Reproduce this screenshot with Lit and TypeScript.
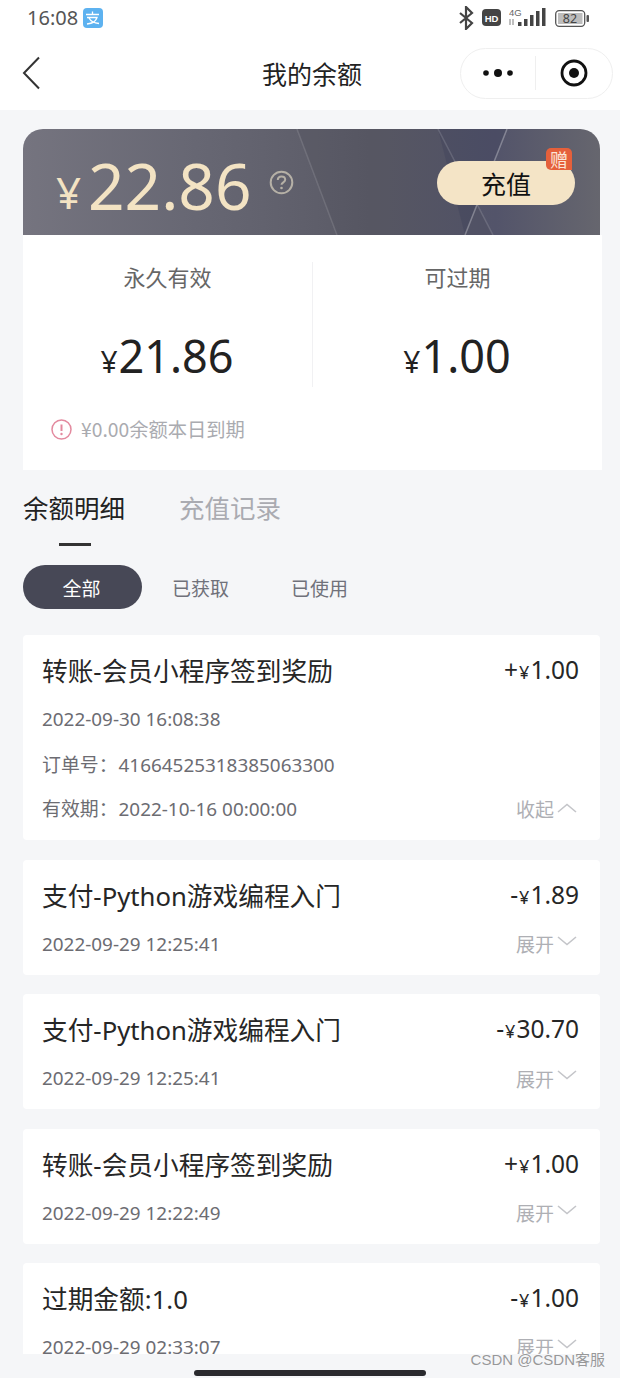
import { LitElement, html, css } from "lit";
import { customElement } from "lit/decorators.js";

const up = html`<svg class="chev up" viewBox="0 0 20 10" width="20" height="10"><path d="M1 9 L10 1.500 L19 9" fill="none" stroke="#c4c5c9" stroke-width="1.600"/></svg>`;
const down = html`<svg class="chev dn" viewBox="0 0 20 10" width="20" height="10"><path d="M1 1 L10 8.500 L19 1" fill="none" stroke="#c4c5c9" stroke-width="1.600"/></svg>`;

const rows = [
  { t: "支付-Python游戏编程入门", a: "1.89", s: "-", d: "2022-09-29 12:25:41" },
  { t: "支付-Python游戏编程入门", a: "30.70", s: "-", d: "2022-09-29 12:25:41" },
  { t: "转账-会员小程序签到奖励", a: "1.00", s: "+", d: "2022-09-29 12:22:49" },
  { t: "过期金额:1.0", a: "1.00", s: "-", d: "2022-09-29 02:33:07" },
];

@customElement("app-root")
export class AppRoot extends LitElement {
  static styles = css`
    :host { display: block; width: 620px; height: 1378px; overflow: hidden; position: relative; background: #f5f6f8;
      font-family: "Noto Sans CJK SC", "Noto Sans", sans-serif; color: #222; }
    * { box-sizing: border-box; }
    .status { height: 36px; background: #fff; display: flex; align-items: center; padding: 0 30px 0 27px; color: #555; }
    .time { font-family: "Noto Sans", sans-serif; font-size: 20px; line-height: 36px; color: #555; }
    .ali { margin-left: 5px; }
    .status-right { margin-left: auto; display: flex; align-items: center; gap: 8px; }
    .nav { height: 74px; background: #fff; display: flex; align-items: center; padding: 0 7px 0 22px; }
    .nav-title { flex: 1; text-align: center; font-size: 25px; color: #222; padding-left: 122px; line-height: 74px; }
    .capsule { width: 153px; height: 51px; border: 1px solid #efefef; border-radius: 26px; display: flex; align-items: center; background: #fff; }
    .cap-l { width: 75px; height: 34px; display: flex; align-items: center; justify-content: center; border-right: 1px solid #efefef; }
    .cap-r { flex: 1; display: flex; justify-content: center; }
    .main { height: 1244px; overflow: hidden; padding: 19px 0 0 23px; }
    .hero { width: 577px; height: 106px; border-radius: 20px 20px 0 0; position: relative; overflow: hidden;
      background: linear-gradient(90deg, #75747f 0%, #676773 30%, #5a5a66 60%, #53546a 82%, #66666e 100%); display: flex; align-items: center; padding-left: 34px; }
    .hero-bg { position: absolute; inset: 0; }
    .hero-y { position: relative; font-size: 44px; color: #f3e3c3; margin-top: 20px; font-family: "Noto Sans", sans-serif; font-weight: 400; line-height: 44px; width: 32px; margin-left: -1px; }
    .hero-a { position: relative; font-family: "Noto Sans", sans-serif; font-weight: 400; font-size: 64px; line-height: 106px; color: #f3e3c3; margin-top: 8px; }
    .q { position: relative; margin-left: 17px; margin-top: 0; }
    .recharge { position: absolute; left: 414px; top: 32px; width: 138px; height: 44px; border-radius: 22px; background: #f4e4c6; color: #111;
      font-size: 25px; display: flex; align-items: center; justify-content: center; }
    .gift { position: absolute; left: 523px; top: 19px; width: 26px; height: 22px; background: #e5603b; color: #fbe6d8; font-size: 18px; line-height: 22px; text-align: center; border-radius: 5px 5px 0 5px; }
    .sum { width: 579px; height: 235px; background: #fff; display: flex; flex-direction: column; }
    .cols { display: flex; height: 125px; margin-top: 27px; }
    .col { flex: 1; display: flex; flex-direction: column; align-items: center; }
    .col + .col { border-left: 1px solid #f1f1f3; }
    .col-l { font-size: 22px; color: #666; line-height: 34px; margin-top: -3px; }
    .col-v { font-family: "Noto Sans", sans-serif; font-size: 45px; line-height: 62px; color: #222; margin-top: 32px; display: flex; align-items: baseline; margin-left: -1px; }
    .y { font-size: 30px; margin-right: 1px; }
    .warn { display: flex; align-items: center; gap: 9px; margin: 28px 0 0 28px; font-size: 19.300px; color: #aaabb0; line-height: 28px; }
    .tabs { display: flex; gap: 54px; margin-top: 18px; height: 38px; font-size: 25.500px; line-height: 38px; color: #aaabb1; }
    .tab-on { color: #222; position: relative; }
    .tab-on::after { content: ""; position: absolute; left: 36px; top: 55px; width: 32px; height: 3px; background: #333; }
    .pills { display: flex; height: 44px; margin-top: 39px; }
    .pill { width: 119px; height: 44px; border-radius: 22px; display: flex; align-items: center; justify-content: center; font-size: 19px; color: #70717a; padding-right: 2px; }
    .pill.on { background: #474856; color: #fff; }
    .list { display: flex; flex-direction: column; gap: 19.400px; margin-top: 26.400px; width: 577px; }
    .card { background: #fff; border-radius: 4px; padding: 14px 21px 0 19px; flex: none; height: 115px; }
    .card.big { height: 205px; }
    .row { display: flex; justify-content: space-between; align-items: center; height: 42px; }
    .ttl { font-size: 25.700px; color: #262626; font-family: "Noto Sans", "Noto Sans CJK SC", sans-serif; }
    .amt { font-family: "Noto Sans", sans-serif; font-size: 24.500px; color: #262626; display: flex; align-items: baseline; margin-top: -1px; }
    .amt .y { font-size: 18px; margin: 0 1px; }
    .row2 { display: flex; justify-content: space-between; align-items: center; height: 28px; margin-top: 14px; font-size: 18.900px; color: #6c6c72; font-family: "Noto Sans", "Noto Sans CJK SC", sans-serif; }
    .row2.g { margin-top: 16.500px; }
    .lbl { margin-right: 1px; }
    .more { color: #aeafb4; display: flex; align-items: center; gap: 3px; font-family: "Noto Sans CJK SC", sans-serif; margin-right: 2px; font-size: 19px; }
    .chev.up { margin-top: -1px; }
    .chev.dn { margin-top: -6px; }
    .bottom { position: absolute; left: 0; right: 0; top: 1354px; height: 24px; background: #f5f6f8; display: flex; justify-content: center; align-items: flex-end; padding-bottom: 2px; }
    .home { width: 232px; height: 6px; border-radius: 3px; background: #2a2a2e; }
    .mark { position: absolute; right: 15px; top: 1350px; font-family: "Liberation Sans", "Noto Sans CJK SC", sans-serif; font-size: 15px; line-height: 20px; color: rgba(120,120,120,.75); }
  `;

  render() {
    return html`
      <div class="status">
        <span class="time">16:08</span>
        <svg class="ali" width="20" height="20" viewBox="0 0 20 20"><rect width="20" height="20" rx="4" fill="#5db2f0"/><path d="M3 6.500h13M9.500 3.500v3M4 9.500h10c-1 3.500-5 6-10 6.500M6 10c1.500 3 5 5 10 5.500" fill="none" stroke="#fff" stroke-width="1.300"/></svg>
        <div class="status-right">
          <svg width="16" height="24" viewBox="0 0 16 24"><path d="M2 7l12 10-6 6V1l6 6L2 17" fill="none" stroke="#444" stroke-width="2.200"/></svg>
          <svg width="19" height="18" viewBox="0 0 19 18"><rect width="19" height="17" rx="4" fill="#444"/><text x="9.500" y="12.500" font-family="Liberation Sans" font-size="9.500" font-weight="700" fill="#fff" text-anchor="middle">HD</text></svg>
          <svg width="38" height="22" viewBox="0 0 38 22">
            <text x="0" y="9" font-family="Liberation Sans" font-size="9.500" fill="#666">4G</text>
            <path d="M1 12v6M4 12v6" stroke="#aaa" stroke-width="1.500"/>
            <rect x="9" y="15" width="3.500" height="4" fill="#444"/><rect x="15" y="12" width="3.500" height="7" fill="#444"/><rect x="21" y="8" width="3.500" height="11" fill="#444"/><rect x="27" y="4" width="3.500" height="15" fill="#444"/><rect x="33" y="1" width="3.500" height="18" fill="#444"/>
          </svg>
          <svg width="35" height="17" viewBox="0 0 35 17"><rect x=".7" y=".7" width="29" height="15.600" rx="3.500" fill="none" stroke="#555" stroke-width="1.300"/><rect x="3" y="3" width="24.500" height="11" fill="#bdbdbd"/><rect x="31.500" y="5" width="2.500" height="7" rx="1" fill="#555"/><text x="15" y="13" font-family="Noto Sans" font-size="12.500" fill="#444" text-anchor="middle">82</text></svg>
        </div>
      </div>
      <div class="nav">
        <svg width="20" height="34" viewBox="0 0 20 34"><path d="M17 1.500 L2 17 L17 32.500" fill="none" stroke="#333" stroke-width="2"/></svg>
        <div class="nav-title">我的余额</div>
        <div class="capsule">
          <div class="cap-l"><svg width="32" height="12" viewBox="0 0 32 12"><circle cx="4" cy="6" r="2.800" fill="#111"/><circle cx="16" cy="6" r="4" fill="#111"/><circle cx="28" cy="6" r="2.800" fill="#111"/></svg></div>
          <div class="cap-r"><svg width="28" height="28" viewBox="0 0 28 28"><circle cx="14" cy="14" r="12" fill="none" stroke="#111" stroke-width="2.800"/><circle cx="14" cy="14" r="5" fill="#111"/></svg></div>
        </div>
      </div>
      <div class="main">
        <div class="hero">
          <svg class="hero-bg" width="577" height="106" viewBox="0 0 577 106">
            <path d="M274 0H415L470 106H314Z" fill="rgba(70,70,85,.18)"/>
            <path d="M415 0H484L442 106Z" fill="rgba(60,62,90,.35)"/>
            <path d="M274 0 L314 106" stroke="rgba(255,255,255,.12)" stroke-width="1.500"/>
            <path d="M415 0 L470 106" stroke="rgba(255,255,255,.14)" stroke-width="1.500"/>
            <path d="M484 0 L442 106" stroke="rgba(255,255,255,.3)" stroke-width="1.500"/>
          </svg>
          <span class="hero-y">¥</span>
          <span class="hero-a">22.86</span>
          <svg class="q" width="25" height="25" viewBox="0 0 25 25"><circle cx="12.500" cy="12.500" r="10.800" fill="none" stroke="#b5b0a6" stroke-width="2"/><path d="M8.800 10c0-2.200 1.700-3.500 3.700-3.500s3.700 1.300 3.700 3.300c0 2.500-3.700 2.500-3.700 5" fill="none" stroke="#b5b0a6" stroke-width="2"/><circle cx="12.500" cy="18" r="1.300" fill="#b5b0a6"/></svg>
          <div class="recharge">充值</div>
          <div class="gift">赠</div>
        </div>
        <div class="sum">
          <div class="cols">
            <div class="col"><div class="col-l">永久有效</div><div class="col-v"><span class="y">¥</span>21.86</div></div>
            <div class="col"><div class="col-l">可过期</div><div class="col-v"><span class="y">¥</span>1.00</div></div>
          </div>
          <div class="warn">
            <svg width="21" height="21" viewBox="0 0 21 21"><circle cx="10.500" cy="10.500" r="9.500" fill="none" stroke="#e38a9f" stroke-width="1.500"/><path d="M10.500 5.500v6.500" stroke="#e38a9f" stroke-width="2"/><circle cx="10.500" cy="15" r="1.200" fill="#e38a9f"/></svg>
            <span>¥0.00余额本日到期</span>
          </div>
        </div>
        <div class="tabs"><div class="tab-on">余额明细</div><div>充值记录</div></div>
        <div class="pills"><div class="pill on">全部</div><div class="pill">已获取</div><div class="pill">已使用</div></div>
        <div class="list">
          <div class="card big">
            <div class="row"><span class="ttl">转账-会员小程序签到奖励</span><span class="amt">+<span class="y">¥</span>1.00</span></div>
            <div class="row2"><span>2022-09-30 16:08:38</span></div>
            <div class="row2 g"><span><span class="lbl">订单号：</span>41664525318385063300</span></div>
            <div class="row2 g"><span><span class="lbl">有效期：</span>2022-10-16 00:00:00</span><span class="more">收起${up}</span></div>
          </div>
          ${rows.map(r => html`
            <div class="card">
              <div class="row"><span class="ttl">${r.t}</span><span class="amt">${r.s}<span class="y">¥</span>${r.a}</span></div>
              <div class="row2"><span>${r.d}</span><span class="more">展开${down}</span></div>
            </div>`)}
        </div>
      </div>
      <div class="bottom"><div class="home"></div></div>
      <div class="mark">CSDN @CSDN客服</div>
    `;
  }
}
